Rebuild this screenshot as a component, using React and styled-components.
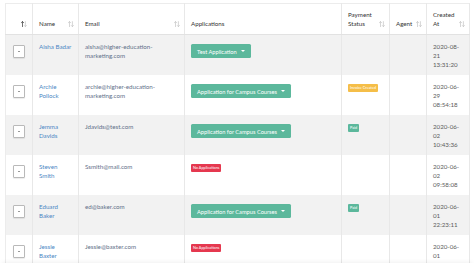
import React from 'react';
import styled, { createGlobalStyle } from 'styled-components';

const rows = [
    { name: ['Aisha Badar'], email: ['aisha@higher-education-', 'marketing.com'], app: { kind: 'button', label: 'Test Application' }, pay: null, created: ['2020-08-', '21', '13:31:20'] },
    { name: ['Archie', 'Pollock'], email: ['archie@higher-education-', 'marketing.com'], app: { kind: 'button', label: 'Application for Campus Courses' }, pay: 'invoice', created: ['2020-06-', '29', '08:54:18'] },
    { name: ['Jemma', 'Davids'], email: ['Jdavids@test.com'], app: { kind: 'button', label: 'Application for Campus Courses' }, pay: 'paid', created: ['2020-06-', '02', '10:43:36'] },
    { name: ['Steven', 'Smith'], email: ['Ssmith@mail.com'], app: { kind: 'none' }, pay: null, created: ['2020-06-', '02', '09:58:08'] },
    { name: ['Eduard', 'Baker'], email: ['ed@baker.com'], app: { kind: 'button', label: 'Application for Campus Courses' }, pay: 'paid', created: ['2020-06-', '01', '22:23:11'] },
    { name: ['Jessie', 'Baxter'], email: ['Jessie@baxter.com'], app: { kind: 'none' }, pay: null, created: ['2020-06-', '01', '22:20:52'] },
];

const columns = [
    { key: 'toggle', label: [], width: 27 },
    { key: 'name', label: ['Name'], width: 46 },
    { key: 'email', label: ['Email'], width: 106 },
    { key: 'app', label: ['Applications'], width: 157, noSort: true },
    { key: 'pay', label: ['Payment', 'Status'], width: 48 },
    { key: 'agent', label: ['Agent'], width: 37 },
    { key: 'created', label: ['Created', 'At'], width: 43 },
];

const SortIcon = ({ active }) => (
    <svg width="6" height="6" viewBox="0 0 6 6">
        <g fill="none" strokeWidth="0.7" strokeLinecap="round">
            <path d="M1.5 5.6V0.6M0.4 1.7L1.5 0.6L2.6 1.7" stroke={active ? '#333' : '#c4c4c4'} />
            <path d="M4.4 0.6V5.6M3.3 4.5L4.4 5.6L5.5 4.5" stroke="#c4c4c4" />
        </g>
    </svg>
);

const App = () => {
    return(
        <>
            <GlobalStyle />
            <Frame>
                <Table>
                    <colgroup>
                        {columns.map(c => <col key={c.key} style={{ width: c.width }} />)}
                    </colgroup>
                    <thead>
                        <tr>
                            {columns.map(c => (
                                <HeadCell key={c.key}>
                                    <HeadInner $center={c.key === 'toggle'}>
                                        <span>{c.label.map(l => <div key={l}>{l}</div>)}</span>
                                        {!c.noSort && <SortIcon active={c.key === 'toggle'} />}
                                    </HeadInner>
                                </HeadCell>
                            ))}
                        </tr>
                    </thead>
                    <tbody>
                        {rows.map((r, i) => (
                            <Row key={i} $striped={i % 2 === 0}>
                                <Cell $center>
                                    <ToggleButton><Caret /></ToggleButton>
                                </Cell>
                                <Cell>
                                    <NameLink>{r.name.map(n => <div key={n}>{n}</div>)}</NameLink>
                                </Cell>
                                <Cell>
                                    <Email>{r.email.map(e => <div key={e}>{e}</div>)}</Email>
                                </Cell>
                                <Cell>
                                    {r.app.kind === 'button'
                                        ? <AppButton>{r.app.label}<ButtonCaret /></AppButton>
                                        : <Badge $tone="red">No Applications</Badge>}
                                </Cell>
                                <Cell>
                                    {r.pay === 'invoice' && <Badge $tone="orange">Invoice Created</Badge>}
                                    {r.pay === 'paid' && <Badge $tone="green">Paid</Badge>}
                                </Cell>
                                <Cell />
                                <Cell>
                                    <DateText>{r.created.map(d => <div key={d}>{d}</div>)}</DateText>
                                </Cell>
                            </Row>
                        ))}
                    </tbody>
                </Table>
                <BottomFade />
            </Frame>
        </>
    );
}

export default App;


/* Styled Components */
const GlobalStyle = createGlobalStyle`
    html, body{
        margin: 0;
        background: #ffffff;
        font-family: Lato, "Noto Sans", sans-serif;
        overflow: hidden;
    }
`;

const Frame = styled.div`
    position: relative;
    width: 474px;
    height: 270px;
    padding: 3px 0 0 5px;
    box-sizing: border-box;
    overflow: hidden;
`;

const Table = styled.table`
    width: 465px;
    table-layout: fixed;
    border-collapse: collapse;
    border-top: 1px solid #ececec;
    border-left: 1px solid #ececec;
    font-size: 6.2px;
    line-height: 9px;
`;

const HeadCell = styled.th`
    height: 31px;
    box-sizing: border-box;
    padding: 0 4px 6px 6px;
    vertical-align: bottom;
    text-align: left;
    font-weight: normal;
    color: #333333;
    background: #ffffff;
    border-right: 1px solid #e8e8e8;
    border-bottom: 1px solid #e2e2e2;
`;

const HeadInner = styled.div`
    display: flex;
    align-items: flex-end;
    justify-content: ${p => p.$center ? 'flex-end' : 'space-between'};
    padding-right: ${p => p.$center ? '1px' : '0'};

    svg{
        flex: none;
        margin-bottom: 1px;
    }
`;

const Row = styled.tr`
    background: ${p => p.$striped ? '#f2f2f2' : '#ffffff'};
`;

const Cell = styled.td`
    height: 40px;
    box-sizing: border-box;
    padding: 7px 4px 6px 6px;
    vertical-align: top;
    text-align: ${p => p.$center ? 'center' : 'left'};
    border-right: 1px solid #e8e8e8;
    ${p => p.$center && 'padding: 10px 0 0 0;'}
`;

const ToggleButton = styled.span`
    display: inline-flex;
    align-items: center;
    justify-content: center;
    width: 12px;
    height: 13px;
    box-sizing: border-box;
    background: #ffffff;
    border: 1px solid #b9b9b9;
    border-radius: 1px;
    box-shadow: 0 1px 1px rgba(0, 0, 0, 0.08);
`;

const Caret = styled.span`
    width: 0;
    height: 0;
    border-left: 1.5px solid transparent;
    border-right: 1.5px solid transparent;
    border-top: 1.5px solid #333333;
`;

const NameLink = styled.div`
    color: #4d87c4;
`;

const Email = styled.div`
    color: #5f7089;
`;

const DateText = styled.div`
    color: #5c5c5c;
`;

const AppButton = styled.span`
    display: inline-flex;
    align-items: center;
    gap: 4px;
    margin-top: 2px;
    height: 14px;
    padding: 0 6px;
    background: #5cb89c;
    color: #ffffff;
    border-radius: 1.5px;
    font-size: 5.7px;
    white-space: nowrap;
`;

const ButtonCaret = styled.span`
    width: 0;
    height: 0;
    border-left: 2px solid transparent;
    border-right: 2px solid transparent;
    border-top: 2px solid #ffffff;
`;

const toneColors = {
    red: '#e5384f',
    orange: '#f5be48',
    green: '#5cb89c',
};

const Badge = styled.span`
    display: inline-block;
    margin-top: 1px;
    height: 8px;
    line-height: 8px;
    padding: 0 2px;
    font-size: 3.8px;
    color: #ffffff;
    background: ${p => toneColors[p.$tone]};
    border-radius: 1px;
    white-space: nowrap;
`;

const BottomFade = styled.div`
    position: absolute;
    left: 0;
    right: 0;
    bottom: 0;
    height: 7px;
    background: #ffffff;
    box-shadow: 0 -2px 5px -2px rgba(0, 0, 0, 0.1);
`;
